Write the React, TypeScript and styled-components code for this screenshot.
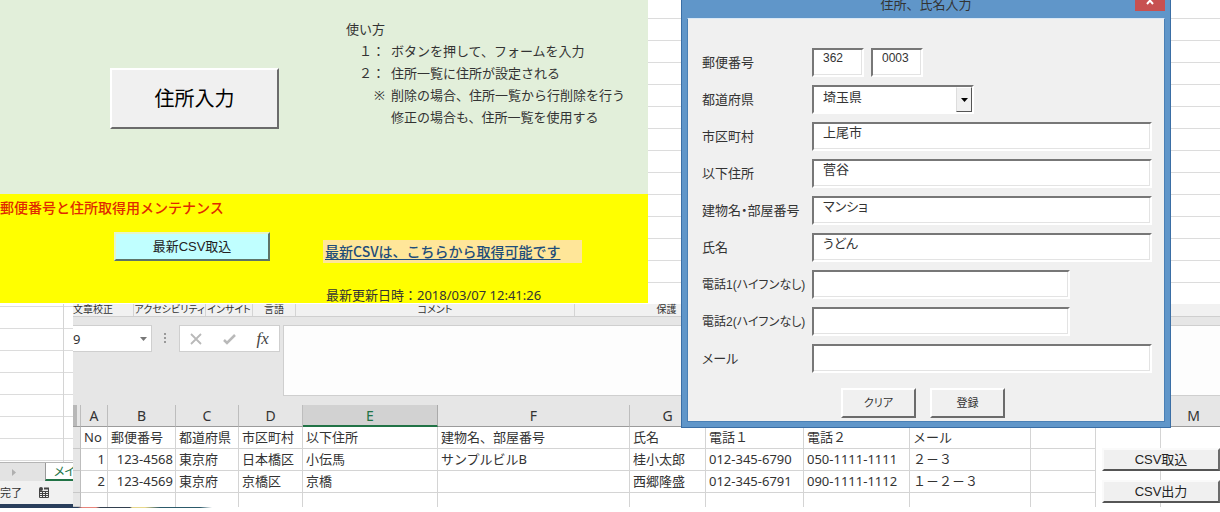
import React from "react";
import styled, { createGlobalStyle, css } from "styled-components";

const GlobalStyle = createGlobalStyle`
  *, *::before, *::after { box-sizing: border-box; }
  body {
    margin: 0;
    background: #fff;
    color: #333;
    font: 13px/22px "Noto Sans", "Noto Sans CJK JP", sans-serif;
    overflow: hidden;
  }
  button, input, select, textarea { font: inherit; color: inherit; margin: 0; border-radius: 0; }
`;

const cellRules = (offset: number) => css`
  background-color: #fff;
  background-image: linear-gradient(#dcdcdc 1px, transparent 1px);
  background-size: 100% 22px;
  background-position: 0 ${offset}px;
`;

const Page = styled.div`
  position: relative;
  min-width: 1180px;
  overflow: hidden;
`;

/* ---------- upper sheet ---------- */

const MainSheet = styled.section`
  display: flex;
  ${cellRules(18)}
`;

const Panels = styled.div`
  flex: 0 0 648px;
  padding-bottom: 1px;
`;

const GuidePanel = styled.div`
  display: flex;
  align-items: flex-start;
  gap: 67px;
  min-height: 194px;
  padding: 18px 16px 0 110px;
  background: #e2efda;
`;

const RaisedButton = styled.button<{ $face?: string }>`
  flex: none;
  padding: 0;
  border: 2px solid;
  border-color: #fff #6b6b6b #6b6b6b #fff;
  background: ${(p) => p.$face ?? "#f0f0f0"};
  color: #222;
  font-family: "Liberation Sans", "Noto Sans CJK JP", sans-serif;
  text-align: center;
`;

const EntryButton = styled(RaisedButton)`
  width: 169px;
  height: 61px;
  margin-top: 50px;
  color: #000;
  font-size: 20px;
`;

const Guide = styled.div``;

const GuideTitle = styled.h2`
  margin: 0;
  font: inherit;
`;

const Steps = styled.dl`
  display: grid;
  grid-template-columns: 39px auto;
  column-gap: 6px;
  margin: 0;
  dt { text-align: right; white-space: nowrap; }
  dd { margin: 0; white-space: nowrap; grid-column: 2; }
`;

const MaintenancePanel = styled.div`
  height: 109px;
  padding-top: 3px;
  background: #ff0;
`;

const MaintenanceTitle = styled.h2`
  margin: 0;
  color: #e02a00;
  font-size: 14px;
  font-weight: 500;
  line-height: 22px;
`;

const MaintenanceRow = styled.div`
  display: flex;
  align-items: flex-start;
  gap: 53px;
  padding: 13px 0 0 114px;
`;

const ImportButton = styled(RaisedButton)`
  width: 156px;
  height: 29px;
  border-color: #e6f5c8 #5d7468 #5d7468 #e6f5c8;
`;

const Source = styled.div`
  margin-top: 8px;
`;

const LinkCell = styled.div`
  width: 259px;
  padding-left: 2px;
  background: #ffe699;
  font-size: 14px;
  line-height: 22px;
  a {
    color: #1f4e79;
    font-family: "Noto Sans CJK JP", sans-serif;
    font-weight: 500;
    text-decoration-thickness: 1px;
    text-underline-offset: 2px;
  }
`;

const Updated = styled.p`
  margin: 22px 0 0;
  padding-left: 3px;
  line-height: 20px;
`;

/* ---------- lower workbooks ---------- */

const Lower = styled.section`
  display: flex;
`;

const SideSheet = styled.div`
  flex: 0 0 73px;
  display: flex;
  flex-direction: column;
  background: #2a3f5c;
  overflow: hidden;
`;

const SideGrid = styled.div`
  height: 158px;
  display: flex;
  justify-content: flex-end;
  ${cellRules(2)}
  &::after {
    content: "";
    width: 10px;
    border-left: 1px solid #d4d4d4;
  }
`;

const TabBar = styled.div`
  display: flex;
  justify-content: space-between;
  align-items: center;
  height: 19px;
  padding-left: 12px;
  border-top: 1px solid #b5b5b5;
  background: #e3e3e3;
`;

const SheetTab = styled.button`
  width: 28px;
  height: 18px;
  padding: 0 0 0 8px;
  border: 0;
  border-left: 1px solid #999;
  border-bottom: 2px solid #217346;
  background: #fff;
  color: #217346;
  font-size: 12px;
  line-height: 15px;
  text-align: left;
  white-space: nowrap;
  overflow: hidden;
  font-feature-settings: "palt";
`;

const StatusBar = styled.div`
  display: flex;
  align-items: center;
  gap: 16px;
  height: 23px;
  background: #f1f1f1;
  font-size: 11px;
`;

const Workbook = styled.div`
  flex: 1;
  min-width: 0;
  background: #e6e6e6;
`;

const Ribbon = styled.div`
  display: flex;
  height: 13px;
  border-bottom: 1px solid #cfcfcf;
  background: #f1f1f1;
`;

const RibbonGroup = styled.span<{ $w: number; $start?: boolean }>`
  flex: 0 0 ${(p) => p.$w}px;
  min-width: 0;
  border-right: 1px solid #d4d4d4;
  font-size: 10px;
  line-height: 10px;
  text-align: ${(p) => (p.$start ? "left" : "center")};
  white-space: nowrap;
  font-feature-settings: "palt";
`;

const FormulaBar = styled.div`
  display: flex;
  align-items: flex-start;
  height: 88px;
  padding-top: 8px;
`;

const NameBox = styled.label`
  display: flex;
  align-items: center;
  width: 79px;
  height: 27px;
  padding-right: 4px;
  border: 1px solid #cfcfcf;
  border-left: 0;
  background: #fff;
  input {
    flex: 1;
    min-width: 0;
    padding: 0;
    border: 0;
    outline: 0;
    background: none;
  }
`;

const Grip = styled.svg`
  margin: 7px 12px 0 11px;
`;

const FormulaTools = styled.div`
  display: flex;
  align-items: center;
  justify-content: space-around;
  width: 101px;
  height: 27px;
  margin-right: 3px;
  border: 1px solid #cfcfcf;
  background: #fff;
`;

const ToolButton = styled.button`
  display: flex;
  padding: 0;
  border: 0;
  background: none;
  color: #444;
  font: italic 17px/20px "Liberation Serif", serif;
`;

const FormulaInput = styled.textarea`
  flex: 1;
  height: 71px;
  border: 1px solid #cfcfcf;
  border-right: 0;
  outline: 0;
  background: #fdfdfd;
  resize: none;
`;

const Sheet = styled.table`
  width: 100%;
  border-collapse: separate;
  border-spacing: 0;
  table-layout: fixed;
  background: #fff;
`;

const ColumnHead = styled.th<{ $selected?: boolean }>`
  height: 22px;
  padding: 0;
  border-right: 1px solid ${(p) => (p.$selected ? "#aaa" : "#bdbdbd")};
  border-bottom: ${(p) => (p.$selected ? "2px solid #217346" : "1px solid #9b9b9b")};
  background: ${(p) => (p.$selected ? "#d2d2d2" : "#e6e6e6")};
  color: ${(p) => (p.$selected ? "#217346" : "#333")};
  font-size: 14px;
  font-weight: 400;
  line-height: 19px;
  text-align: center;
  &:last-child { border-right: 0; padding-left: 6px; }
`;

const Corner = styled(ColumnHead)`
  background: linear-gradient(90deg, #b8b8b8 4px, #e6e6e6 4px);
`;

const Cell = styled.td<{ $right?: boolean }>`
  height: 22px;
  padding: 0 2px 0 3px;
  border-right: 1px solid #d4d4d4;
  border-bottom: 1px solid #d4d4d4;
  line-height: 21px;
  text-align: ${(p) => (p.$right ? "right" : "left")};
  white-space: nowrap;
  &:nth-last-child(-n + 2) { border-bottom-color: transparent; }
  &:last-child { border-right: 0; }
`;

const LastCell = styled(Cell)`
  height: 14px;
  border-bottom: 0;
`;

const RowHead = styled.td`
  border-right: 1px solid #bdbdbd;
  border-bottom: 1px solid #c8c8c8;
  background: #e6e6e6;
`;

const SheetActions = styled.div`
  position: absolute;
  right: 0;
  top: 448px;
  display: grid;
  gap: 9px;
  width: 118px;
`;

const SheetButton = styled(RaisedButton)`
  height: 23px;
  line-height: 18px;
  border-color: #fafafa #6b6b6b #555 #fafafa;
`;

const Taskbar = styled.div`
  height: 1px;
  background: linear-gradient(90deg, #2a3f5c 0 78px, #e8857c 82px 96px, #33404f 100px 130px, #e8d88c 132px 145px, #2c5a6a 160px 200px, #fff 212px);
`;

/* ---------- address dialog ---------- */

const Dialog = styled.form`
  position: absolute;
  left: 681px;
  top: 0;
  width: 490px;
  padding: 0 5px 5px;
  border: 1px solid #3a6ea5;
  border-top: 0;
  background: #6096c9;
  color: #333;
  font-family: "Liberation Sans", "Noto Sans CJK JP", sans-serif;
  font-feature-settings: "palt";
`;

const TitleBar = styled.header`
  display: grid;
  grid-template-columns: 30px 1fr 30px;
  height: 18px;
  h1 {
    margin: 0;
    font-size: 13px;
    font-weight: 400;
    line-height: 10px;
    text-align: center;
    font-feature-settings: normal;
  }
`;

const CloseButton = styled.button`
  display: flex;
  justify-content: center;
  height: 11px;
  padding: 0;
  border: 0;
  background: #c75050;
`;

const DialogBody = styled.div`
  display: grid;
  gap: 8px;
  padding: 29px 12px 3px 14px;
  border: 1px solid #4a80b5;
  border-top-color: #d9e8f6;
  background: #f0f0f0;
`;

const Field = styled.div<{ $long?: boolean }>`
  display: grid;
  grid-template-columns: 110px 1fr;
  align-items: center;
  height: 29px;
  label {
    font-size: ${(p) => (p.$long ? 12 : 13)}px;
    white-space: nowrap;
  }
`;

const sunken = css`
  border: 2px solid;
  border-color: #777 #fff #fff #777;
  box-shadow: inset -1px -1px 0 #e3e3e3;
  background: #fff;
`;

const TextBox = styled.input<{ $w?: number }>`
  width: ${(p) => (p.$w ? `${p.$w}px` : "100%")};
  height: 29px;
  padding: 0 4px 10px 9px;
  outline: 0;
  ${sunken}
`;

const PostalBox = styled(TextBox)`
  font-size: 12px;
`;

const PostalPair = styled.div`
  display: flex;
  gap: 7px;
`;

const Combo = styled.div`
  display: grid;
  grid-template-columns: 1fr 16px;
  width: 162px;
  height: 29px;
  ${sunken}
  box-shadow: none;
  select {
    grid-area: 1 / 1 / 2 / 3;
    height: 25px;
    padding: 0 20px 9px 9px;
    border: 0;
    outline: 0;
    background: none;
    appearance: none;
  }
`;

const ComboArrow = styled.span`
  grid-area: 1 / 2 / 2 / 3;
  display: flex;
  align-items: center;
  justify-content: center;
  border: 1px solid;
  border-color: #fff #555 #555 #ddd;
  background: #f0f0f0;
  pointer-events: none;
`;

const Actions = styled.div`
  display: flex;
  justify-content: center;
  gap: 14px;
  margin-top: 7px;
  padding-right: 8px;
`;

const DialogButton = styled(RaisedButton)`
  width: 75px;
  height: 30px;
  color: #333;
  font-size: 11px;
  font-feature-settings: "palt";
`;

const columns: { name: string; w?: number }[] = [
  { name: "A", w: 27 },
  { name: "B", w: 68 },
  { name: "C", w: 63 },
  { name: "D", w: 64 },
  { name: "E", w: 135 },
  { name: "F" },
  { name: "G", w: 76 },
  { name: "H", w: 98 },
  { name: "I", w: 106 },
  { name: "J", w: 121 },
  { name: "K", w: 65 },
  { name: "L", w: 65 },
  { name: "M", w: 59 },
];

const headings = ["No", "郵便番号", "都道府県", "市区町村", "以下住所", "建物名、部屋番号", "氏名", "電話１", "電話２", "メール", "", "", ""];

const records = [
  ["1", "123-4568", "東京府", "日本橋区", "小伝馬", "サンプルビルB", "桂小太郎", "012-345-6790", "050-1111-1111", "２－３", "", "", ""],
  ["2", "123-4569", "東京府", "京橋区", "京橋", "", "西郷隆盛", "012-345-6791", "090-1111-1112", "１－２－３", "", "", ""],
];

const ribbonGroups = [
  { name: "文章校正", w: 61, start: true },
  { name: "アクセシビリティ", w: 72 },
  { name: "インサイト", w: 47 },
  { name: "言語", w: 43 },
  { name: "コメント", w: 279 },
  { name: "保護", w: 184 },
];

const fields: { id: string; label: string; value: string; w?: number }[] = [
  { id: "city", label: "市区町村", value: "上尾市" },
  { id: "street", label: "以下住所", value: "菅谷" },
  { id: "building", label: "建物名・部屋番号", value: "マンショ" },
  { id: "name", label: "氏名", value: "うどん" },
  { id: "tel1", label: "電話1(ハイフンなし)", value: "", w: 258 },
  { id: "tel2", label: "電話2(ハイフンなし)", value: "", w: 258 },
  { id: "mail", label: "メール", value: "" },
];

function AddressDialog() {
  return (
    <Dialog onSubmit={(e) => e.preventDefault()}>
      <TitleBar>
        <span />
        <h1>住所、氏名入力</h1>
        <CloseButton type="button" aria-label="閉じる">
          <svg width="8" height="6" viewBox="0 0 8 6">
            <path d="M1 -3L7 4M7 -3L1 4" stroke="#fff" strokeWidth="2" />
          </svg>
        </CloseButton>
      </TitleBar>
      <DialogBody>
        <Field>
          <label htmlFor="zip1">郵便番号</label>
          <PostalPair>
            <PostalBox id="zip1" $w={52} defaultValue="362" />
            <PostalBox aria-label="郵便番号 下4桁" $w={52} defaultValue="0003" />
          </PostalPair>
        </Field>
        <Field>
          <label htmlFor="pref">都道府県</label>
          <Combo>
            <select id="pref" defaultValue="埼玉県">
              <option>埼玉県</option>
            </select>
            <ComboArrow>
              <svg width="7" height="4" viewBox="0 0 7 4">
                <path d="M0 0H7L3.500 4Z" fill="#000" />
              </svg>
            </ComboArrow>
          </Combo>
        </Field>
        {fields.map((f) => (
          <Field key={f.id} $long={f.label.length > 8}>
            <label htmlFor={f.id}>{f.label}</label>
            <TextBox id={f.id} $w={f.w} defaultValue={f.value} />
          </Field>
        ))}
        <Actions>
          <DialogButton type="reset">クリア</DialogButton>
          <DialogButton type="submit">登録</DialogButton>
        </Actions>
      </DialogBody>
    </Dialog>
  );
}

export default function App() {
  return (
    <Page>
      <GlobalStyle />
      <MainSheet>
        <Panels>
          <GuidePanel>
            <EntryButton type="button">住所入力</EntryButton>
            <Guide>
              <GuideTitle>使い方</GuideTitle>
              <Steps>
                <dt>１：</dt>
                <dd>ボタンを押して、フォームを入力</dd>
                <dt>２：</dt>
                <dd>住所一覧に住所が設定される</dd>
                <dt>※</dt>
                <dd>削除の場合、住所一覧から行削除を行う</dd>
                <dd>修正の場合も、住所一覧を使用する</dd>
              </Steps>
            </Guide>
          </GuidePanel>
          <MaintenancePanel>
            <MaintenanceTitle>郵便番号と住所取得用メンテナンス</MaintenanceTitle>
            <MaintenanceRow>
              <ImportButton type="button" $face="#c0ffff">最新CSV取込</ImportButton>
              <Source>
                <LinkCell>
                  <a href="#csv">最新CSVは、こちらから取得可能です</a>
                </LinkCell>
                <Updated>最新更新日時：2018/03/07 12:41:26</Updated>
              </Source>
            </MaintenanceRow>
          </MaintenancePanel>
        </Panels>
      </MainSheet>

      <Lower>
        <SideSheet>
          <SideGrid />
          <TabBar>
            <svg width="4" height="7" viewBox="0 0 4 7">
              <path d="M0 0L4 3.500L0 7Z" fill="#b0b0b0" />
            </svg>
            <SheetTab type="button">メイン</SheetTab>
          </TabBar>
          <StatusBar>
            <span>完了</span>
            <svg width="12" height="11" viewBox="0 0 12 11" fill="none" stroke="#444">
              <path d="M1.500 2V10.500H10.500V2M1 4.500H11M1 6.500H11M1 8.500H11M4.500 4V10M7.500 4V10" />
              <circle cx="3" cy="2" r="2" fill="#444" stroke="none" />
              <path d="M6 1.500H11" strokeWidth="2" />
            </svg>
          </StatusBar>
        </SideSheet>

        <Workbook>
          <Ribbon>
            {ribbonGroups.map((g) => (
              <RibbonGroup key={g.name} $w={g.w} $start={g.start}>{g.name}</RibbonGroup>
            ))}
          </Ribbon>
          <FormulaBar>
            <NameBox>
              <input aria-label="名前ボックス" defaultValue="9" />
              <svg width="7" height="4" viewBox="0 0 7 4">
                <path d="M0 0H7L3.500 4Z" fill="#777" />
              </svg>
            </NameBox>
            <Grip width="4" height="13" viewBox="0 0 4 13" fill="#999">
              <path d="M1 1h2v2h-2zM1 5h2v2h-2zM1 9h2v2h-2z" />
            </Grip>
            <FormulaTools>
              <ToolButton type="button" aria-label="キャンセル">
                <svg width="12" height="12" viewBox="0 0 12 12">
                  <path d="M1 1L11 11M11 1L1 11" stroke="#b9b9b9" strokeWidth="1.800" />
                </svg>
              </ToolButton>
              <ToolButton type="button" aria-label="入力">
                <svg width="13" height="12" viewBox="0 0 13 12" fill="none">
                  <path d="M1 7L4 10L12 2" stroke="#b9b9b9" strokeWidth="2.500" />
                </svg>
              </ToolButton>
              <ToolButton type="button">fx</ToolButton>
            </FormulaTools>
            <FormulaInput aria-label="数式バー" />
          </FormulaBar>

          <Sheet>
            <colgroup>
              <col style={{ width: 8 }} />
              {columns.map((c) => (
                <col key={c.name} style={{ width: c.w }} />
              ))}
            </colgroup>
            <thead>
              <tr>
                <Corner aria-label="すべて選択" />
                {columns.map((c) => (
                  <ColumnHead key={c.name} scope="col" $selected={c.name === "E"}>{c.name}</ColumnHead>
                ))}
              </tr>
            </thead>
            <tbody>
              <tr>
                <RowHead />
                {headings.map((h, i) => (
                  <Cell key={i}>{h}</Cell>
                ))}
              </tr>
              {records.map((r) => (
                <tr key={r[0]}>
                  <RowHead />
                  {r.map((v, i) => (
                    <Cell key={i} $right={i < 2}>{v}</Cell>
                  ))}
                </tr>
              ))}
              <tr>
                <RowHead />
                {columns.map((c) => (
                  <LastCell key={c.name} />
                ))}
              </tr>
            </tbody>
          </Sheet>
        </Workbook>
      </Lower>
      <Taskbar />

      <SheetActions>
        <SheetButton type="button">CSV取込</SheetButton>
        <SheetButton type="button">CSV出力</SheetButton>
      </SheetActions>
      <AddressDialog />
    </Page>
  );
}
